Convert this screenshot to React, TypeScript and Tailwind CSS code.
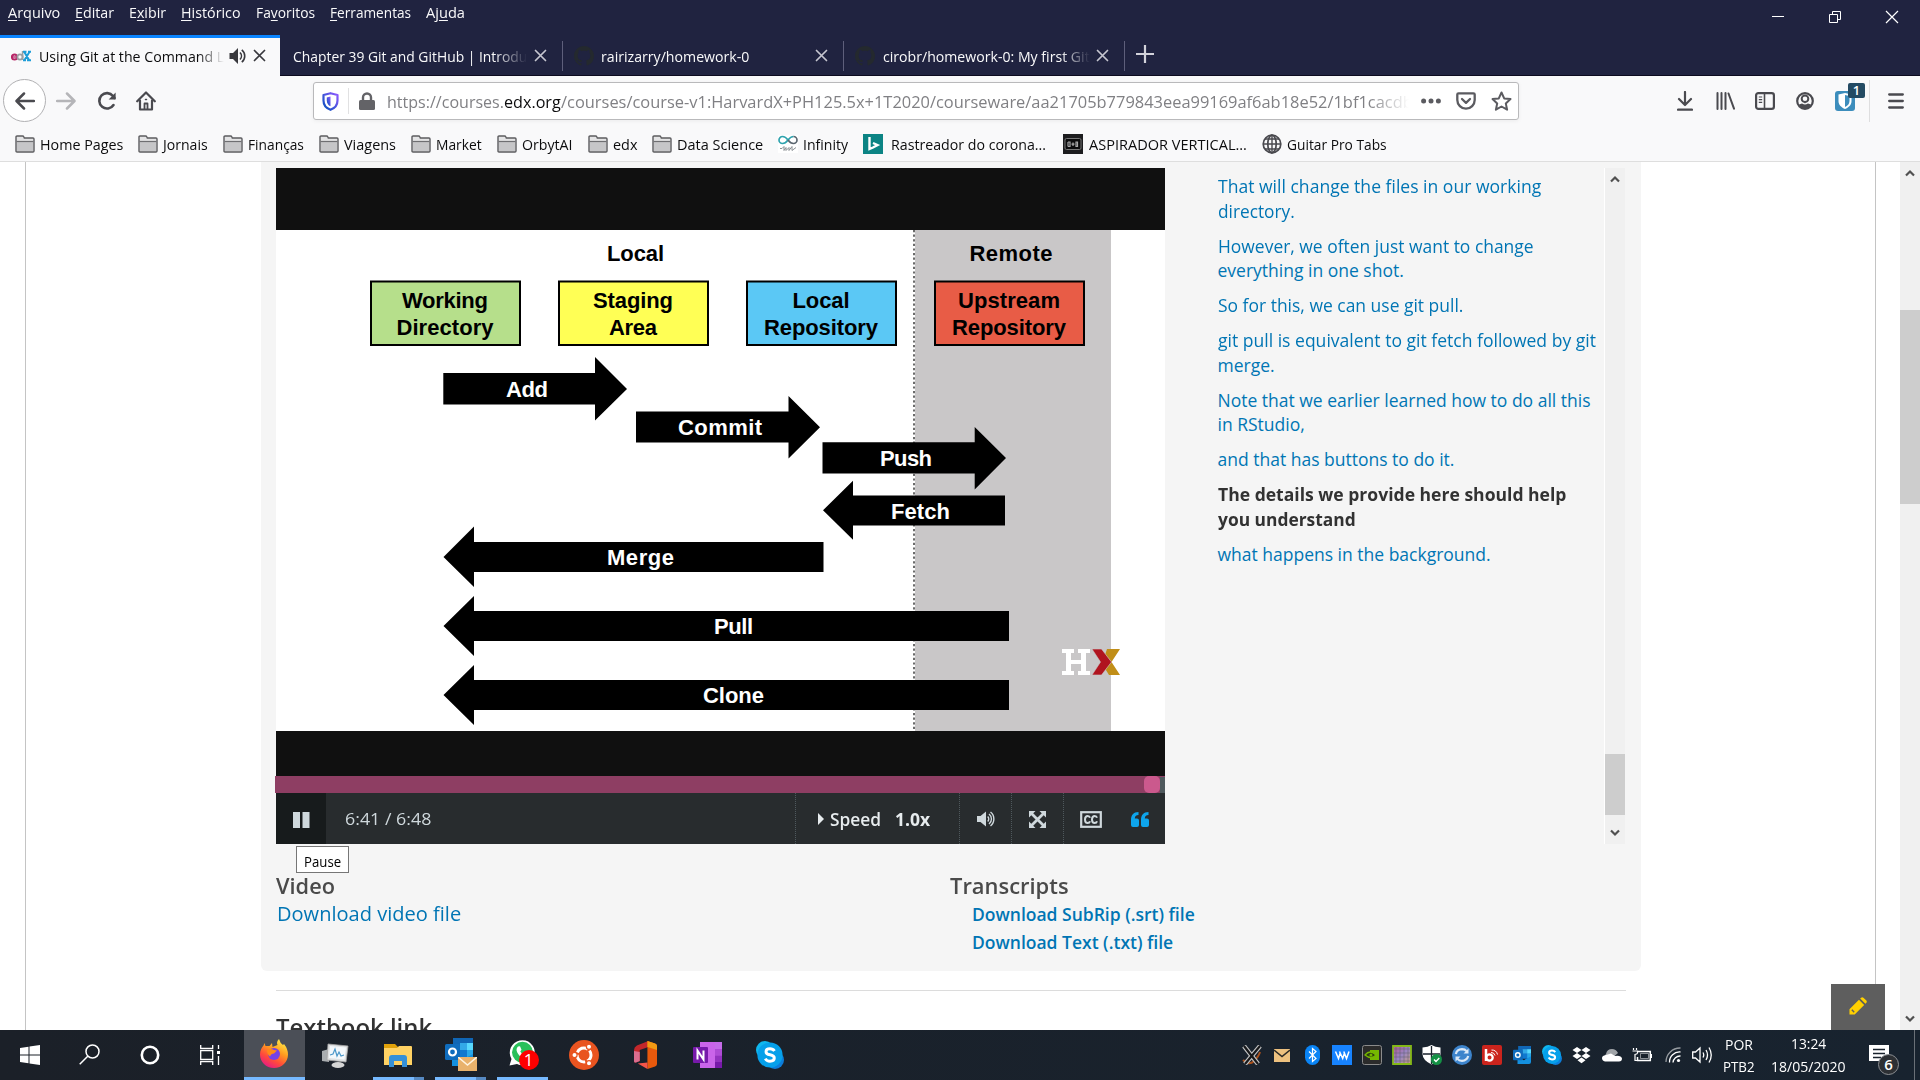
import { useLayoutEffect, useRef, useState, type ReactNode } from "react";

/** Single line of text condensed or widened to an exact advance width. */
function Fit({ w, className = "", children }: { w: number; className?: string; children: ReactNode }) {
  const ref = useRef<HTMLSpanElement>(null);
  const [scale, setScale] = useState(1);
  useLayoutEffect(() => {
    if (ref.current) setScale(w / ref.current.offsetWidth);
  }, [w]);
  return (
    <span className={"block shrink-0 whitespace-nowrap " + className} style={{ width: w }}>
      <span ref={ref} className="inline-block origin-left" style={{ transform: `scaleX(${scale})` }}>
        {children}
      </span>
    </span>
  );
}

/* ---------- Browser header ---------- */

const menus: [string, string, string, number][] = [
  ["", "A", "rquivo", 52],
  ["", "E", "ditar", 39],
  ["E", "x", "ibir", 37],
  ["", "H", "istórico", 60],
  ["Fa", "v", "oritos", 59],
  ["", "F", "erramentas", 81],
  ["Aj", "u", "da", 39],
];

function MenuBar() {
  return (
    <div className="flex h-[34px] justify-between">
      <div className="flex h-[23px] items-center gap-[15px] pl-2 text-[15px] leading-5 text-[#f9f9fa]">
        {menus.map(([a, u, b, w]) => (
          <Fit key={a + u + b} w={w}>
            {a}
            <span className="underline decoration-1 underline-offset-2">{u}</span>
            {b}
          </Fit>
        ))}
      </div>
      <div className="flex text-white">
        <div className="flex w-[57px] items-center justify-center">
          <svg width="14" height="14" stroke="currentColor" fill="none"><path d="M1 6.500h12" /></svg>
        </div>
        <div className="flex w-[57px] items-center justify-center">
          <svg width="14" height="14" stroke="currentColor" fill="none"><path d="M1.500 4.500h8v8h-8zM4.500 4.500v-3h8v8h-3" /></svg>
        </div>
        <div className="flex w-[57px] items-center justify-center">
          <svg width="14" height="14" stroke="currentColor" fill="none" strokeWidth="1.200"><path d="M1 1l12 12M13 1L1 13" /></svg>
        </div>
      </div>
    </div>
  );
}

function Close({ className }: { className: string }) {
  return (
    <svg width="13" height="13" className={"shrink-0 " + className} stroke="currentColor" strokeWidth="1.700" strokeLinecap="round" fill="none">
      <path d="M1.500 1.500l10 10M11.500 1.500l-10 10" />
    </svg>
  );
}

function GithubMark() {
  return (
    <svg width="20" height="20" viewBox="0 0 16 16" className="shrink-0" fill="#24292e">
      <path d="M8 0C3.580 0 0 3.580 0 8c0 3.540 2.290 6.530 5.470 7.590.4.070.55-.17.55-.38 0-.19-.01-.82-.01-1.490-2.010.37-2.530-.49-2.690-.94-.09-.23-.48-.94-.82-1.130-.28-.15-.68-.52-.01-.53.63-.01 1.080.58 1.230.82.72 1.210 1.870.87 2.330.66.070-.52.28-.87.51-1.070-1.780-.2-3.640-.89-3.640-3.950 0-.87.31-1.590.82-2.150-.08-.2-.36-1.020.08-2.120 0 0 .67-.21 2.200.82.64-.18 1.320-.27 2-.27s1.360.09 2 .27c1.530-1.040 2.200-.82 2.200-.82.44 1.100.16 1.920.08 2.120.51.56.82 1.270.82 2.150 0 3.070-1.870 3.750-3.650 3.950.29.25.54.73.54 1.480 0 1.070-.01 1.930-.01 2.200 0 .21.15.46.55.38A8.010 8.010 0 0 0 16 8c0-4.420-3.580-8-8-8z" />
    </svg>
  );
}

function TabBar() {
  return (
    <div className="flex h-[42px] text-[15px] leading-5 text-[#f9f9fa]">
      <div className="mt-px flex w-[280px] shrink-0 border-t-[3px] border-[#0a84ff] bg-[#f9f9fa] pl-[11px] text-[#0c0c0d]">
        <div className="flex h-[35px] items-center">
          <svg width="20" height="14" viewBox="0 0 20 14" className="shrink-0">
            <circle cx="3.500" cy="8" r="2.600" fill="none" stroke="#b72667" strokeWidth="2" />
            <path d="M1 8h5" stroke="#b72667" strokeWidth="1.300" />
            <circle cx="9" cy="8" r="2.600" fill="none" stroke="#9aa0a3" strokeWidth="1.800" />
            <path d="M11.600 2v9" stroke="#9aa0a3" strokeWidth="1.600" />
            <path d="M12 2.700h3.500M17 2.700h3M12 11.300h3M16 11.300h4M13.300 3l4.900 8.300M18.400 3l-5 8.300" stroke="#1d9dd8" strokeWidth="2" />
          </svg>
          <Fit w={185} className="mt-px ml-2 overflow-hidden [mask-image:linear-gradient(to_right,black_86%,transparent)]">Using Git at the Command L</Fit>
          <svg width="18" height="18" viewBox="0 0 18 18" className="ml-[5px] shrink-0" fill="#38383d">
            <path d="M0.500 6h3.500l5-5v16l-5-5H.5z" />
            <path d="M11 5.500a5 5 0 0 1 0 7M12.800 2.800a8 8 0 0 1 0 12.400" fill="none" stroke="#38383d" strokeWidth="1.600" />
          </svg>
          <Close className="ml-[6px] text-[#38383d]" />
        </div>
      </div>
      <div className="flex w-[282px] shrink-0 border-b border-[#0c0b1f] pl-[13px]">
        <div className="flex h-[43px] items-center">
          <Fit w={234} className="mt-px [mask-image:linear-gradient(to_right,black_86%,transparent)]">Chapter 39 Git and GitHub | Introdu</Fit>
          <Close className="ml-[7px] text-[#c6c6d0]" />
        </div>
      </div>
      <div className="flex w-[281px] shrink-0 border-b border-[#0c0b1f]">
        <div className="mt-[7px] h-[30px] w-px bg-[#5e5f7b]" />
        <div className="flex h-[43px] items-center pl-[11px]">
          <GithubMark />
          <Fit w={148} className="mt-px ml-[7px]">rairizarry/homework-0</Fit>
          <Close className="ml-[66px] text-[#c6c6d0]" />
        </div>
      </div>
      <div className="flex w-[281px] shrink-0 border-b border-[#0c0b1f]">
        <div className="mt-[7px] h-[30px] w-px bg-[#5e5f7b]" />
        <div className="flex h-[43px] items-center pl-[11px]">
          <GithubMark />
          <Fit w={207} className="mt-px ml-2 [mask-image:linear-gradient(to_right,black_86%,transparent)]">cirobr/homework-0: My first Git</Fit>
          <Close className="ml-[6px] text-[#c6c6d0]" />
        </div>
      </div>
      <div className="flex grow border-b border-[#0c0b1f]">
        <div className="mt-[7px] h-[30px] w-px bg-[#5e5f7b]" />
        <svg width="18" height="18" className="mt-[11px] ml-[11px]" stroke="#d2d2da" strokeWidth="2.200"><path d="M0 9h18M9 0v18" /></svg>
      </div>
    </div>
  );
}

function Toolbar() {
  return (
    <div className="flex h-[49px] items-center bg-[#f9f9fa] text-[#4a4a4f]">
      <div className="ml-[3px] flex h-[43px] w-[43px] items-center justify-center rounded-full border border-[#b1b1b3] bg-white">
        <svg width="20" height="18" fill="none" stroke="currentColor" strokeWidth="2.500" strokeLinecap="round" strokeLinejoin="round"><path d="M19 9H2M9 1.500L1.500 9 9 16.500" /></svg>
      </div>
      <svg width="20" height="18" className="ml-[10px]" fill="none" stroke="#b5b5b8" strokeWidth="2.500" strokeLinecap="round" strokeLinejoin="round"><path d="M1 9h17M11 1.500L18.500 9 11 16.500" /></svg>
      <svg width="20" height="20" className="ml-[21px]" fill="none" stroke="currentColor" strokeWidth="2.600" strokeLinecap="round"><path d="M16.500 14A7.700 7.700 0 1 1 16 5l1.500 2" /><path d="M18.600 1.500v7h-7z" fill="currentColor" stroke="none" /></svg>
      <svg width="20" height="20" className="ml-[19px]" fill="none" stroke="currentColor" strokeWidth="2.200" strokeLinecap="round" strokeLinejoin="round"><path d="M1.200 10.300L10 1.500l8.800 8.800M4 9.500v9h12v-9" /><path d="M8.500 18v-5.500h3V18" strokeWidth="1.800" /><path d="M9.500 8.500h1" strokeWidth="1.500" /></svg>
      <div className="mt-px ml-[157px] flex h-[38px] w-[1206px] shrink-0 items-center rounded-[3px] border border-[#b9b9bb] bg-white shadow-[0_1px_4px_rgba(0,0,0,0.06)]">
        <svg width="17" height="19" viewBox="0 0 17 19" className="ml-[8px] shrink-0">
          <defs><linearGradient id="shield" x1="1" y1="0" x2="0" y2="1"><stop offset="0" stopColor="#9059ff" /><stop offset="1" stopColor="#0250bb" /></linearGradient></defs>
          <path d="M8.500 1.200L15.500 3v5.500c0 5-3 7.800-7 9.300-4-1.500-7-4.300-7-9.300V3z" fill="none" stroke="url(#shield)" strokeWidth="2.200" strokeLinejoin="round" />
          <path d="M8.500 4.500v9.800c-2.200-1.200-3.700-3-3.700-5.900V5.400z" fill="url(#shield)" />
        </svg>
        <div className="ml-[9px] h-[26px] w-px bg-[#e1e1e2]" />
        <svg width="16" height="18" className="ml-[10px] shrink-0" fill="#636367"><rect y="8" width="16" height="10" rx="1.500" /><path d="M4 9V5.500a4 4 0 0 1 8 0V9" fill="none" stroke="#636367" strokeWidth="2.400" /></svg>
        <div className="mt-[2px] ml-[12px] flex w-[1022px] overflow-hidden text-[17px] leading-6 text-[#808084] [mask-image:linear-gradient(to_right,black_96%,transparent)]">
          <Fit w={117}>https://courses.</Fit>
          <Fit w={57} className="text-[#0c0c0d]">edx.org</Fit>
          <Fit w={852}>/courses/course-v1:HarvardX+PH125.5x+1T2020/courseware/aa21705b779843eea99169af6ab18e52/1bf1cacdb</Fit>
        </div>
        <svg width="20" height="6" className="ml-[12px] shrink-0" fill="#5b5b60"><circle cx="2.600" cy="3" r="2.500" /><circle cx="10" cy="3" r="2.500" /><circle cx="17.400" cy="3" r="2.500" /></svg>
        <svg width="20" height="18" className="ml-[15px] shrink-0" fill="none" stroke="#5b5b60" strokeWidth="2.300" strokeLinejoin="round" strokeLinecap="round"><path d="M2.500 1.300h15q1.200 0 1.200 1.200V8a8.700 8.700 0 0 1-17.400 0V2.500q0-1.200 1.200-1.200z" /><path d="M6 7l4 3.800L14 7" /></svg>
        <svg width="21" height="20" viewBox="0 0 21 20" className="ml-[15px] shrink-0" fill="none" stroke="#5b5b60" strokeWidth="2" strokeLinejoin="round"><path d="M10.500 1.500l2.700 5.900 6.300.7-4.700 4.300 1.300 6.300-5.600-3.200-5.600 3.200 1.300-6.300L1.500 8.100l6.300-.7z" /></svg>
      </div>
      <svg width="16" height="20" className="ml-[158px] shrink-0" fill="none" stroke="currentColor" strokeWidth="2.200" strokeLinecap="round" strokeLinejoin="round"><path d="M8 1v12.500M2 8l6 6 6-6M1 18.700h14" /></svg>
      <svg width="19" height="18" className="ml-[23px] shrink-0" fill="none" stroke="currentColor" strokeWidth="2" strokeLinecap="round"><path d="M1.500 1v16M5.500 1v16M9.500 1v16M12.500 1.500L18 16.700" /></svg>
      <svg width="20" height="18" className="ml-[20px] shrink-0" fill="none" stroke="currentColor" strokeWidth="2.200"><rect x="1.100" y="1.100" width="17.800" height="15.800" rx="2.200" /><path d="M9.500 1v16" strokeWidth="1.600" /><path d="M3.800 5h3.400M3.800 7.700h3.400M3.800 10.400h3.400" strokeWidth="1.200" /></svg>
      <svg width="18" height="18" className="ml-[21px] shrink-0"><circle cx="9" cy="9" r="7.800" fill="none" stroke="currentColor" strokeWidth="2.200" /><circle cx="9" cy="6.800" r="3.300" fill="none" stroke="currentColor" strokeWidth="2" /><path d="M3 12.500q6-3 12 0-2 4.500-6 4.500t-6-4.500z" fill="currentColor" /><path d="M6.500 11q2.500 1.800 5 0" stroke="#f9f9fa" strokeWidth="1.200" fill="none" /></svg>
      <div className="relative ml-[21px] h-[20px] w-[20px] shrink-0">
        <svg width="20" height="20"><rect width="20" height="20" rx="3" fill="#3c8dbc" /><path d="M10 2l6.500 1.500V10c0 4-3 6.500-6.500 8-3.500-1.500-6.500-4-6.500-8V3.500z" fill="#fff" /><path d="M10 4l4.500 1v5c0 3-2 4.800-4.500 6z" fill="#3c8dbc" /></svg>
        <div className="absolute -top-[8px] left-[13px] flex h-[15px] w-[17px] items-center justify-center rounded-[2px] bg-[#244b63] text-[13px] leading-none font-semibold text-white">1</div>
      </div>
      <div className="ml-[14px] h-[42px] w-px shrink-0 bg-[#dededf]" />
      <svg width="16" height="16" className="ml-[18px] shrink-0" stroke="currentColor" strokeWidth="2.300" strokeLinecap="round"><path d="M1.200 1.500h13.600M1.200 8h13.600M1.200 14.500h13.600" /></svg>
    </div>
  );
}

function Folder() {
  return (
    <svg width="20" height="18" className="shrink-0">
      <path d="M1 16V2Q1 1 2 1h5.500q1 0 1.300.8L9.300 3H18q1 0 1 1v12q0 1-1 1H2q-1 0-1-1z" fill="#e4e4e5" stroke="#5c5c5f" strokeWidth="1.400" />
      <path d="M2 7h16v9H2z" fill="#c6c6c8" />
      <path d="M1.500 6.500h17" stroke="#6f6f72" strokeWidth="1.200" />
    </svg>
  );
}

function Bookmark({ w, icon, gap = "ml-[5px]", children }: { w: number; icon?: ReactNode; gap?: string; children: string }) {
  return (
    <div className="flex shrink-0 items-center">
      {icon ?? <Folder />}
      <Fit w={w} className={gap}>{children}</Fit>
    </div>
  );
}

function BookmarksBar() {
  return (
    <div className="h-[37px] border-b border-[#dedede] bg-[#f9f9fa]">
      <div className="flex h-[36px] items-center gap-[15px] pt-px pl-[15px] text-[15px] leading-5 text-[#0c0c0d]">
        <Bookmark w={83}>Home Pages</Bookmark>
        <Bookmark w={45}>Jornais</Bookmark>
        <Bookmark w={56}>Finanças</Bookmark>
        <Bookmark w={52}>Viagens</Bookmark>
        <Bookmark w={46}>Market</Bookmark>
        <Bookmark w={51}>OrbytAI</Bookmark>
        <Bookmark w={24}>edx</Bookmark>
        <Bookmark w={86}>Data Science</Bookmark>
        <Bookmark w={45} icon={
          <svg width="20" height="18" viewBox="0 0 20 18" className="shrink-0"><rect width="20" height="18" fill="#fff" /><path d="M10 5C7.500 1.500 5.500 1.500 4.500 1.500a3.500 3.500 0 0 0 0 7C6.500 8.500 8.500 7 10 5s3.500-3.500 5.500-3.500" fill="none" stroke="#2fa3ae" strokeWidth="1.700" /><path d="M10 5c1.500 2 3.500 3.500 5.500 3.500a3.500 3.500 0 0 0 0-7" fill="none" stroke="#5b6670" strokeWidth="1.700" /><path d="M2 13.500h2l2-2v4l2-3v3l3-3v3l3-4v4l4-3" fill="none" stroke="#8a8f93" /></svg>
        }>Infinity</Bookmark>
        <Bookmark w={155} gap="ml-[8px]" icon={
          <svg width="20" height="20" className="shrink-0"><rect width="20" height="20" fill="#0c8484" /><path d="M6.500 3v12l3.500-1.500 4.500-2.500-4.500-2" fill="none" stroke="#fff" strokeWidth="2.400" /></svg>
        }>Rastreador do corona...</Bookmark>
        <div className="ml-[2px]">
          <Bookmark w={158} gap="ml-[6px]" icon={
            <svg width="20" height="20" className="shrink-0"><rect width="20" height="20" fill="#1d1d1f" /><rect x="2" y="4.500" width="16" height="11" rx="1.500" fill="#0c0c0d" stroke="#777" /><path d="M5 8v4.500M5 8h2v4.500H5M8.500 10.200h3M10 8.500v3.500M13 8v4.500h1.500V8z" stroke="#a8a8a8" strokeWidth="1.200" fill="none" /></svg>
          }>ASPIRADOR VERTICAL...</Bookmark>
        </div>
        <Bookmark w={100} icon={
          <svg width="20" height="20" className="shrink-0" fill="none" stroke="#4a4a4f" strokeWidth="1.700"><circle cx="10" cy="10" r="8.800" /><ellipse cx="10" cy="10" rx="4.200" ry="8.800" /><path d="M1.500 10h17M10 1v18M3 5h14M3 15h14" strokeWidth="1.400" /></svg>
        }>Guitar Pro Tabs</Bookmark>
      </div>
    </div>
  );
}

/* ---------- Video ---------- */

const boxes: { x: number; fill: string; rows: [string, number][] }[] = [
  { x: 94, fill: "#b6df8b", rows: [["Working", 86], ["Directory", 97]] },
  { x: 282, fill: "#ffff55", rows: [["Staging", 80], ["Area", 48]] },
  { x: 470, fill: "#5bc8f5", rows: [["Local", 57], ["Repository", 114]] },
  { x: 658, fill: "#e85c46", rows: [["Upstream", 102], ["Repository", 114]] },
];

const arrows = [
  { d: "M167.300 143H319V127L351 159 319 190.500V174.500H167.300z", label: "Add", x: 251, y: 167, w: 42 },
  { d: "M360 181.500H512.500V166L544 197.300 512.500 228.500V212.500H360z", label: "Commit", x: 444, y: 205, w: 84 },
  { d: "M546.500 212.300H698.700V197L730 228 698.700 259.500V243.500H546.500z", label: "Push", x: 630, y: 235.500, w: 52 },
  { d: "M547 280.300L577 250.700V265.500H729V295.500H577V309.700z", label: "Fetch", x: 644.500, y: 288.500, w: 59 },
  { d: "M167.500 327L198 296.500V312H547.500V342H198V357z", label: "Merge", x: 364.500, y: 335, w: 67 },
  { d: "M167.500 396L198 366V381H733V411H198V426z", label: "Pull", x: 457.500, y: 404, w: 39 },
  { d: "M167.500 465L198 435V450H733V480H198V495z", label: "Clone", x: 457.500, y: 473, w: 61 },
];

function Slide() {
  return (
    <svg width="889" height="501" viewBox="0 0 889 501" className="block bg-white font-['Liberation_Sans',sans-serif] text-[22px] font-bold" textAnchor="middle">
      <rect x="639" width="196" height="501" fill="#c9c7c8" />
      <path d="M638 0V501" stroke="#fff" strokeWidth="2" />
      <path d="M638 0V501" stroke="#6b6b6b" strokeWidth="2" strokeDasharray="2.200 2.400" />
      <text x="359.500" y="31" textLength="57">Local</text>
      <text x="735" y="31.300" textLength="83">Remote</text>
      {boxes.map((b) => (
        <g key={b.x}>
          <rect x={b.x + 1} y="51.500" width="149" height="63.500" fill={b.fill} stroke="#000" strokeWidth="2" />
          <text x={b.x + 75} y="78" textLength={b.rows[0][1]}>{b.rows[0][0]}</text>
          <text x={b.x + 75} y="105" textLength={b.rows[1][1]}>{b.rows[1][0]}</text>
        </g>
      ))}
      {arrows.map((a) => (
        <g key={a.label}>
          <path d={a.d} />
          <text x={a.x} y={a.y} textLength={a.w} fill="#fff">{a.label}</text>
        </g>
      ))}
      <path d="M786 419h12v4h-3v7h10v-7h-3v-4h12v4h-4v18h4v4h-12v-4h3v-7h-10v7h3v4h-12v-4h4v-18h-4z" fill="#fff" />
      <path d="M831 419h13L835.500 432 844 445H833L829 438.500 835.500 432 829 425z" fill="#c18e18" />
      <path d="M816 419h9.500L835.500 432 825.500 445H816L824.500 432z" fill="#b0141f" stroke="#c9c7c8" strokeWidth=".6" />
    </svg>
  );
}

function Player() {
  return (
    <div className="h-[676px] w-[889px] shrink-0 bg-[#101010] pt-[62px]">
      <Slide />
      <div className="h-[45px]" />
      <div className="-ml-px flex h-[17px] w-[890px] bg-[#8e3e63]">
        <div className="ml-[869px] h-[17px] w-[16px] rounded-[5px] bg-[#cb598d]" />
        <div className="mt-px h-4 w-[5px] bg-[#4f595d]" />
      </div>
      <div className="flex h-[51px] bg-[#282c2e] text-[#d6dcdf]">
        <div className="flex w-[50px] items-center justify-center bg-[#171b1c]">
          <svg width="17" height="16" fill="#cfd8dc" className="mt-0.5"><path d="M0 0h7v16H0zM9.500 0h7v16h-7z" /></svg>
        </div>
        <div className="flex h-[50px] w-[469px] items-center pt-px pl-[19px] text-[17px] text-[#cfd8dc]">
          <Fit w={86} className="font-medium">6:41 / 6:48</Fit>
        </div>
        <div className="flex w-[164px] items-center border-l border-dotted border-[#4f595d] pt-px pl-[22px] text-[18px] text-[#e7ecee]">
          <svg width="6" height="12"><path d="M0 0l6 6-6 6z" fill="#e7ecee" /></svg>
          <Fit w={51} className="ml-[6px] font-semibold">Speed</Fit>
          <Fit w={35} className="ml-[14px] font-bold">1.0x</Fit>
        </div>
        <div className="flex w-[52px] items-center border-l border-dotted border-[#4f595d] pt-px pl-[17px]">
          <svg width="18" height="16" viewBox="0 0 18 16"><path d="M0 5h3.500L9 .5v15L3.500 11H0z" fill="#cfd8dc" /><path d="M10.700 5.500a3.500 3.500 0 0 1 0 5M12 3a6.300 6.300 0 0 1 0 10M13.500 1a9 9 0 0 1 0 14" fill="none" stroke="#cfd8dc" strokeWidth="1.400" /></svg>
        </div>
        <div className="flex w-[52px] items-center border-l border-dotted border-[#4f595d] pt-0.5 pl-[17px]">
          <svg width="17" height="17" fill="#cfd8dc"><path d="M0 0h6.500L0 6.500zM17 0v6.500L10.500 0zM0 17v-6.500L6.500 17zM17 17h-6.500L17 10.500z" /><path d="M2 2l13 13M15 2L2 15" stroke="#cfd8dc" strokeWidth="2.800" /></svg>
        </div>
        <div className="flex grow items-center border-l border-dotted border-[#4f595d] pt-0.5 pl-[16px]">
          <svg width="22" height="17" fill="none" stroke="#cfd8dc"><rect x="1.200" y="1.200" width="19.600" height="14.600" strokeWidth="2.200" /><path d="M10 6.800Q9.500 5 7.700 5 5 5 5 8.500T7.700 12Q9.500 12 10 10.200M17 6.800Q16.500 5 14.700 5 12 5 12 8.500t2.700 3.500q1.800 0 2.300-1.800" strokeWidth="2" /></svg>
          <svg width="18" height="15" viewBox="0 0 18 15" className="ml-[29px]" fill="#0ea5ec"><path d="M0 8C0 3 2.500 0 7.500 0v3C5 3 3.800 4.500 3.800 6.500H6q2 0 2 2V13q0 2-2 2H2q-2 0-2-2zM10 8c0-5 2.500-8 7.500-8v3c-2.500 0-3.700 1.500-3.700 3.500H16q2 0 2 2V13q0 2-2 2h-4q-2 0-2-2z" /></svg>
        </div>
      </div>
    </div>
  );
}

const captions: { current?: boolean; lines: [string, number][] }[] = [
  { lines: [["That will change the files in our working", 323], ["directory.", 77]] },
  { lines: [["However, we often just want to change", 316], ["everything in one shot.", 186]] },
  { lines: [["So for this, we can use git pull.", 245.500]] },
  { lines: [["git pull is equivalent to git fetch followed by git", 378], ["merge.", 57]] },
  { lines: [["Note that we earlier learned how to do all this", 373], ["in RStudio,", 87]] },
  { lines: [["and that has buttons to do it.", 237]] },
  { current: true, lines: [["The details we provide here should help", 348], ["you understand", 138]] },
  { lines: [["what happens in the background.", 273]] },
];

function Chevron({ down = false }: { down?: boolean }) {
  return (
    <svg width="10" height="8" fill="none" stroke="#505050" strokeWidth="2.200" className="shrink-0">
      <path d={down ? "M1 1.500l4 4 4-4" : "M1 6.500l4-4 4 4"} />
    </svg>
  );
}

function Transcript() {
  return (
    <>
      <div className="w-[439px] shrink-0 pt-[6.400px] pl-[52.500px] text-[17.500px] leading-[24.600px]">
        {captions.map((c) => (
          <div key={c.lines[0][0]} className={c.current ? "mb-[10.300px] font-bold text-[#323232]" : "mb-[10.300px] text-[#0075b4]"}>
            {c.lines.map(([t, w]) => <Fit key={t} w={w}>{t}</Fit>)}
          </div>
        ))}
      </div>
      <div className="flex h-[676px] w-[21px] shrink-0 flex-col items-center border-l border-white bg-[#f0f0f0]">
        <div className="flex h-[21px] items-center"><Chevron /></div>
        <div className="mt-[565px] h-[61px] w-full bg-[#cdcdcd]" />
        <div className="mt-[7px] flex h-[22px] items-center"><Chevron down /></div>
      </div>
    </>
  );
}

function Page() {
  return (
    <div className="relative flex h-[868px] overflow-hidden bg-white">
      <div className="ml-[25px] w-[1851px] shrink-0 border-x border-[#c4c4c4] pl-[235px]">
        <div className="h-[809px] w-[1380px] rounded-b-[6px] bg-[#f5f5f5] pt-[6px] pl-[15px]">
          <div className="flex">
            <Player />
            <Transcript />
          </div>
          <div className="flex pt-[27px] text-[#4a4a4a]">
            <div className="w-[674px]">
              <Fit w={59} className="text-[21px] leading-[30px] font-semibold">Video</Fit>
              <Fit w={184} className="ml-px text-[19.500px] leading-[25px] text-[#0075b4]">Download video file</Fit>
            </div>
            <div>
              <Fit w={119} className="text-[21px] leading-[30px] font-semibold">Transcripts</Fit>
              <div className="-mt-px pl-[22px] text-[17.500px] leading-[28px] font-semibold text-[#0075b4]">
                <Fit w={223}>Download SubRip (.srt) file</Fit>
                <Fit w={201}>Download Text (.txt) file</Fit>
              </div>
            </div>
          </div>
        </div>
        <div className="mt-[19px] ml-[15px] w-[1350px] border-t border-[#dcdcdc] pt-[21px]">
          <Fit w={156} className="text-[23px] leading-[30px] font-semibold text-[#323232]">Textbook link</Fit>
        </div>
      </div>
      <div className="ml-[24px] flex w-5 shrink-0 flex-col items-center bg-[#f0f0f0]">
        <div className="flex h-[22px] items-center"><Chevron /></div>
        <div className="mt-[126px] h-[194px] w-full bg-[#cdcdcd]" />
        <div className="mt-auto flex h-[22px] items-center"><Chevron down /></div>
      </div>
      <div className="absolute top-[684px] left-[296px] flex h-[27px] w-[53px] items-center justify-center border border-[#767676] bg-white pt-0.5 text-[15px] leading-5 text-black">
        <Fit w={37}>Pause</Fit>
      </div>
      <div className="absolute right-[35px] bottom-0 flex h-[46px] w-[54px] items-center justify-center bg-[#5e5e5e]">
        <svg width="18" height="18" viewBox="0 0 19 19" className="-mt-[3px] -ml-px" fill="#ffd000"><path d="M.5 18.500V13L10.500 3 16 8.500 6 18.500zM11.800 1.700l1-1q1.200-1 2.400 0L18.300 3.800q1 1.200 0 2.400l-1 1z" /><path d="M3 13.500L5.500 16" stroke="#5e5e5e" strokeWidth="1.500" /></svg>
      </div>
    </div>
  );
}

/* ---------- Taskbar ---------- */

function OutlookIcon({ size }: { size: number }) {
  return (
    <svg width={size} height={size} viewBox="0 0 28 28" className="shrink-0">
      <path d="M8 0h20v20H8z" fill="#1066b5" /><path d="M15 5h7v7h-7z" fill="#32a9e7" /><path d="M22 5h6v7h-6z" fill="#58d9fd" /><path d="M15 12h7v7h-7z" fill="#0f78d0" /><path d="M22 12h6v7h-6z" fill="#28a8ea" />
      <path d="M7 17l10 5 11-6v9q0 3-3 3H7z" fill="#1490df" />
      <rect y="6" width="15" height="16" rx="1.500" fill="#0f6cbd" /><circle cx="7.500" cy="14" r="3.500" fill="none" stroke="#fff" strokeWidth="2.200" />
    </svg>
  );
}

function SkypeIcon({ size }: { size: number }) {
  return (
    <svg width={size} height={size} viewBox="0 0 28 28" className="shrink-0">
      <circle cx="9" cy="9" r="9" fill="#0fb7ef" /><circle cx="19" cy="19" r="9" fill="#0c7ddb" /><circle cx="14" cy="14" r="12.600" fill="#06a0ea" />
      <path d="M18.500 10Q17 7.800 14 7.800q-4 0-4 2.900 0 2.400 4 3.100 4.300.8 4.300 3.300 0 3.100-4.300 3.100-3.300 0-4.700-2.600" fill="none" stroke="#fff" strokeWidth="2.900" />
    </svg>
  );
}

function TaskButton({ w, bar, active = false, children }: { w: string; bar?: string; active?: boolean; children: ReactNode }) {
  return (
    <div className={"flex shrink-0 flex-col items-center " + w + (active ? " bg-[#4b4f57]" : "")}>
      <div className="flex h-[47px] items-center">{children}</div>
      {bar && (
        <div className="flex h-[3px] w-full justify-center">
          <div className={"h-[3px] bg-[#76b9ff] " + bar} />
          {bar === "w-[41px]" && <div className="h-[3px] w-[10px] bg-[#5689c2]" />}
        </div>
      )}
    </div>
  );
}

function TaskApps() {
  return (
    <div className="flex">
      <TaskButton w="w-[60px]">
        <svg width="20" height="20" fill="#fff" className="mt-[3px]"><path d="M0 3l8.500-1.300v7.800H0zM9.500 1.500L20 0v9.500H9.500zM0 10.500h8.500v7.800L0 17zM9.500 10.500H20V20L9.500 18.500z" /></svg>
      </TaskButton>
      <TaskButton w="w-[60px]">
        <svg width="21" height="21" fill="none" stroke="#fff" strokeWidth="1.500" className="mt-[2px] -ml-px"><circle cx="13.500" cy="7.500" r="6.500" /><path d="M9 12L.7 20.300" /></svg>
      </TaskButton>
      <TaskButton w="w-[60px]">
        <svg width="20" height="20" fill="none" stroke="#fff" strokeWidth="2.600" className="mt-[3px]"><circle cx="10" cy="10" r="8.200" /></svg>
      </TaskButton>
      <TaskButton w="w-[60px]">
        <svg width="20" height="20" fill="none" stroke="#fff" strokeWidth="1.300" className="mt-[3px]"><path d="M.7 0v3.500h12V0M.7 20v-3.500h12V20M.7 5.700h12v8.600H.7zM18.500 0v4M18.500 11v9" /><path d="M17 6h3v3h-3z" fill="#fff" stroke="none" /></svg>
      </TaskButton>
      <div className="w-1" />
      <TaskButton w="w-[61px]" bar="w-full" active>
        <svg width="28" height="29" viewBox="0 0 28 29" className="-ml-px">
          <defs>
            <linearGradient id="fox" x1=".8" y1="0" x2=".25" y2="1"><stop offset="0" stopColor="#fff24a" /><stop offset=".4" stopColor="#ff9a1f" /><stop offset=".7" stopColor="#ff4a3b" /><stop offset="1" stopColor="#e3178b" /></linearGradient>
          </defs>
          <path d="M14 29C6 29 0 23 0 15.500 0 11 2 8.500 3.500 6.500L4.500 4l1 3h4L12 4l.5 4 5-2Q16 3 19 0q1 4 4 6l1-1q4 5 4 10.500C28 23 22 29 14 29z" fill="url(#fox)" />
          <circle cx="14" cy="15" r="6" fill="#7542e5" /><path d="M7 11q4-2 7 0l3 .5-3 3q-3 0-4 3-3-2-3-6.500z" fill="#ff8a16" />
        </svg>
      </TaskButton>
      <TaskButton w="w-[61px]">
        <svg width="28" height="26" viewBox="0 0 28 26" className="mt-[4px] -ml-px"><path d="M1 8l7-2v13l-7-1z" fill="#a9adb0" /><path d="M7 1l20 2-2 16-19-2z" fill="#dfe1e2" stroke="#a3a3a3" strokeWidth=".8" /><path d="M9 3l16 1.500-1.500 12L8 15z" fill="#f4f8fb" /><path d="M9 12l3-1 2-5 2 7 2-4 2 4 3-1" fill="none" stroke="#4b97c9" strokeWidth="1.200" /><ellipse cx="17" cy="22" rx="6.500" ry="3" fill="#d5d5d5" /></svg>
      </TaskButton>
      <TaskButton w="w-[64px]" bar="w-[41px]">
        <svg width="28" height="24" viewBox="0 0 28 24" className="mt-[3px]"><path d="M0 1h11l3 3v4H0z" fill="#e0a10a" /><path d="M0 5h13l2-2h12q1 0 1 1v18H0z" fill="#ffd264" /><path d="M5 24v-9q0-3 3-3h12q3 0 3 3v9h-5v-6h-8v6z" fill="#3590d8" /></svg>
      </TaskButton>
      <TaskButton w="w-[60px]" bar="w-[41px]">
        <div className="relative ml-0.5 h-[32px] w-[32px]">
          <OutlookIcon size={28} />
          <svg width="19" height="14" className="absolute right-0 -bottom-px"><path d="M0 0h19v14H0z" fill="#e9b26c" /><path d="M0 0l9.500 8L19 0" fill="none" stroke="#fff3df" strokeWidth="1.500" /></svg>
        </div>
      </TaskButton>
      <TaskButton w="w-[64px]" bar="w-[51px]">
        <div className="relative ml-[3px] h-[30px] w-[30px]">
          <svg width="27" height="27" viewBox="0 0 27 27"><path d="M.5 26.500l2-6.500A12.500 12.500 0 1 1 8 25z" fill="#fff" /><circle cx="13.500" cy="13.300" r="10.500" fill="#29c05a" /><path d="M9 7.500l2-.3 1.500 3.500-1.200 1.700q1.500 3 4.200 4l1.500-1.800 3.500 1.800q-.5 3.800-4 3.300C11.500 19 8 14.500 7.500 11Q7.500 8.500 9 7.500z" fill="#fff" /></svg>
          <div className="absolute right-0 -bottom-[1px] flex h-5 w-5 items-center justify-center rounded-full bg-[#fe0000] text-[17px] leading-none text-white">1</div>
        </div>
      </TaskButton>
      <TaskButton w="w-[60px]">
        <svg width="30" height="30" className="mt-[2px]"><circle cx="15" cy="15" r="15" fill="#e95420" /><circle cx="15" cy="15" r="7" fill="none" stroke="#fff" strokeWidth="3" strokeDasharray="12.500 2.160" strokeDashoffset="5" /><g fill="#fff" stroke="#e95420" strokeWidth="1.200"><circle cx="5.500" cy="15" r="2.600" /><circle cx="20" cy="6.800" r="2.600" /><circle cx="20" cy="23.200" r="2.600" /></g></svg>
      </TaskButton>
      <TaskButton w="w-[63px]">
        <svg width="23" height="28" viewBox="0 0 24 28" preserveAspectRatio="none" className="mt-[2px] -ml-px"><path d="M15 0L3 4.500Q0 6 0 9v11q0 2 2 1.500l4-1.500V9l9-3z" fill="#c3272b" /><path d="M0 10v10q0 2 2 1.500l4-1.500v-9z" fill="#db6d8e" /><path d="M14 0l8 2.500q2 .7 2 2.500v18q0 1.800-2 2.500L14 28z" fill="#e8590c" /><path d="M4 22.500l10-1V28z" fill="#f4554a" /><path d="M14 0l8 2.500q2 .7 2 2.500v4l-10-3z" fill="#f19a13" /></svg>
      </TaskButton>
      <TaskButton w="w-[61px]">
        <svg width="29" height="28" viewBox="0 0 29 28" className="mt-[2px]"><path d="M7 1h22v26H7z" fill="#ca64ea" /><path d="M22 1h7v7h-7z" fill="#c56be8" /><path d="M22 8h7v6.500h-7z" fill="#ae4bd5" /><path d="M22 14.500h7V21h-7z" fill="#9332bf" /><path d="M22 21h7v6h-7z" fill="#7719aa" /><rect y="6" width="15" height="16" rx="1" fill="#7719aa" /><path d="M4.500 18.500v-9l6 9v-9" fill="none" stroke="#fff" strokeWidth="2" /></svg>
      </TaskButton>
      <TaskButton w="w-[64px]"><div className="mt-[2px]"><SkypeIcon size={28} /></div></TaskButton>
    </div>
  );
}

function Tray() {
  return (
    <div className="flex text-white">
      <div className="flex h-[50px] items-center">
        <svg width="20" height="20" className="mr-[12px]"><path d="M1 15q6 6 11 1t6-9" fill="none" stroke="#a8501c" strokeWidth="2" /><path d="M2 1l14 18M18 1L3 19" stroke="#c4c4c4" strokeWidth="4.500" /><path d="M2 1l14 18M18 1L3 19" stroke="#17181a" strokeWidth="2.200" /></svg>
        <svg width="16" height="13" className="mr-[15px]"><path d="M0 0h16v13H0z" fill="#edc17f" /><path d="M0 1l8 6.500L16 1" fill="none" stroke="#2b2a26" strokeWidth="1.500" /></svg>
        <svg width="15" height="20" className="mr-[12px]"><rect width="15" height="20" rx="7.500" fill="#0a84f5" /><path d="M4 6.500l7 7-3.500 3V3.500l3.500 3-7 7" fill="none" stroke="#fff" strokeWidth="1.200" /></svg>
        <svg width="20" height="20" className="mr-[10px]"><path d="M0 0h20v20H0z" fill="#1783ff" /><path d="M3.500 6.500L6.500 13.500 8.200 8M7.500 6.500l3.200 7L12.500 8M11.800 6.500l2.700 7L17 6.500" fill="none" stroke="#fff" strokeWidth="1.500" /></svg>
        <svg width="20" height="20" className="mr-[10px]"><rect x=".5" y=".5" width="19" height="19" rx="2" fill="#2b2b2b" stroke="#8b8b8b" /><path d="M8 5h9v10H8z" fill="#76b900" /><path d="M3 10q5-6 11 0-5 5-11 0z" fill="#2b3a10" stroke="#76b900" strokeWidth="1.300" /><circle cx="9" cy="10" r="1.500" fill="#76b900" /></svg>
        <svg width="20" height="20" className="mr-[10px]"><defs><linearGradient id="grid" x1="0" y1="0" x2="1" y2="1"><stop stopColor="#b5588f" /><stop offset=".5" stopColor="#9a86c4" /><stop offset="1" stopColor="#c9a07e" /></linearGradient></defs><path d="M1 1h18v18H1z" fill="url(#grid)" stroke="#84b817" strokeWidth="1.800" /><path d="M4 2v16M8 2v16M12 2v16M16 2v16M2 4h16M2 8h16M2 12h16M2 16h16" stroke="#5d5d6d" strokeWidth=".5" /></svg>
        <svg width="20" height="20" className="mr-[10px]"><path d="M9.500 0Q13 2 18.500 2.500V9q0 6-9 10.500Q.5 15 .5 9V2.500Q6 2 9.500 0z" fill="#fff" /><path d="M9.500 1v18M1 9h17" stroke="#19222c" strokeWidth="1.300" /><circle cx="14.500" cy="14.500" r="5.500" fill="#149145" /><path d="M12 14.500l2 2 3.300-3.500" fill="none" stroke="#fff" strokeWidth="1.300" /></svg>
        <svg width="20" height="20" className="mr-[10px]"><circle cx="10" cy="10" r="10" fill="#3d84cc" /><path d="M3.800 9Q5 4.500 10 4.200q3 0 4.500 2M16.200 11Q15 15.500 10 15.800q-3 0-4.500-2" fill="none" stroke="#dce9f7" strokeWidth="2.200" /><path d="M16.500 3.500v5h-5zM3.500 16.500v-5h5z" fill="#dce9f7" /></svg>
        <svg width="20" height="20" className="mr-[11px]"><rect width="20" height="20" rx="2" fill="#cb241d" /><path d="M4 4v12" stroke="#fff" strokeWidth="2.500" /><circle cx="7.500" cy="12.500" r="3.200" fill="none" stroke="#fff" strokeWidth="2.300" /><path d="M9 7.500a4 4 0 0 1 4 3M9.500 5a6 6 0 0 1 6 4.500" fill="none" stroke="#fff" strokeWidth="1" /></svg>
        <div className="mr-[11px]"><OutlookIcon size={18} /></div>
        <div className="mr-[10px]"><SkypeIcon size={20} /></div>
        <svg width="19" height="17" viewBox="0 0 19 17" fill="#fff" className="mr-[11px]"><path d="M5 0l4.500 3L5 6 .5 3zM14 0l4.500 3L14 6 9.500 3zM5 6l4.500 3L5 12 .5 9zM14 6l4.500 3L14 12 9.500 9zM9.500 10.500l4 2.700-4 3-4-3z" /></svg>
        <svg width="20" height="14" className="mr-[10px]"><path d="M4 12Q1 9 4 6q1-5 6-5 4 0 6 4l-8 7z" fill="#a0a4a8" /><path d="M3 13.500q-3-1-3-3.500t4-3l5-1.500 4 2.500q6-1 7 2.500 0 3-3 3z" fill="#fff" /></svg>
        <svg width="20" height="14" className="mr-[13px]" fill="none" stroke="#fff" strokeWidth="1.500"><path d="M6 3.500h12.300v9H5.500V9" /><path d="M19.500 6v4" /><path d="M8.500 5.500h8v5h-8z" fill="#19222c" strokeWidth=".5" /><path d="M1.500 0v2M4.500 0v2M.5 3h5v2q0 1-2.500 1.500v6h3" strokeWidth="1.200" /></svg>
        <svg width="16" height="16" className="mr-[11px]" fill="none" stroke="#fff" strokeWidth="1.300"><path d="M1 15A14 14 0 0 1 15.500 1" opacity=".55" /><path d="M4.500 15.500A10 10 0 0 1 15.500 5M8 15.500a7 7 0 0 1 7.500-6.500" /><circle cx="13.500" cy="13.500" r="1.600" fill="#fff" stroke="none" /></svg>
        <svg width="21" height="18" fill="none" stroke="#fff" strokeWidth="1.300"><path d="M.7 6h2.800L8 2v14l-4.500-4H.7zM11 6.500q1.500 2.500 0 5M14 4q3 5 0 10M17 1.500q4.500 7.500 0 15" /></svg>
      </div>
      <div className="ml-[10px] flex w-[32px] flex-col items-center pt-[3px] text-[15px] leading-[22px]">
        <Fit w={28}>POR</Fit>
        <Fit w={32}>PTB2</Fit>
      </div>
      <div className="ml-[16px] flex w-[75px] flex-col items-center pt-[2px] text-[15px] leading-[22.500px]">
        <Fit w={35}>13:24</Fit>
        <Fit w={75}>18/05/2020</Fit>
      </div>
      <div className="relative ml-[23px] w-[45px] pt-[15px]">
        <svg width="20" height="20"><path d="M0 0h20v16h-6v4l-4-4H0z" fill="#fff" /><path d="M4 4.500h12M4 8.500h12M4 12.500h8" stroke="#19222c" strokeWidth="1.300" /></svg>
        <div className="absolute top-[24px] left-[9px] flex h-[21px] w-[21px] items-center justify-center rounded-full border border-[#8c8f93] bg-[#2d3034] text-[15px] leading-none font-semibold">6</div>
      </div>
      <div className="w-[6px] border-l border-[#6a7077]" />
    </div>
  );
}

export default function App() {
  return (
    <div className="h-[1080px] w-[1920px] overflow-hidden bg-white font-['Open_Sans',sans-serif]">
      <div className="bg-[#202340]">
        <MenuBar />
        <TabBar />
      </div>
      <Toolbar />
      <BookmarksBar />
      <Page />
      <div className="flex h-[50px] justify-between bg-[linear-gradient(to_right,#1b2028,#18232f)]">
        <TaskApps />
        <Tray />
      </div>
    </div>
  );
}
